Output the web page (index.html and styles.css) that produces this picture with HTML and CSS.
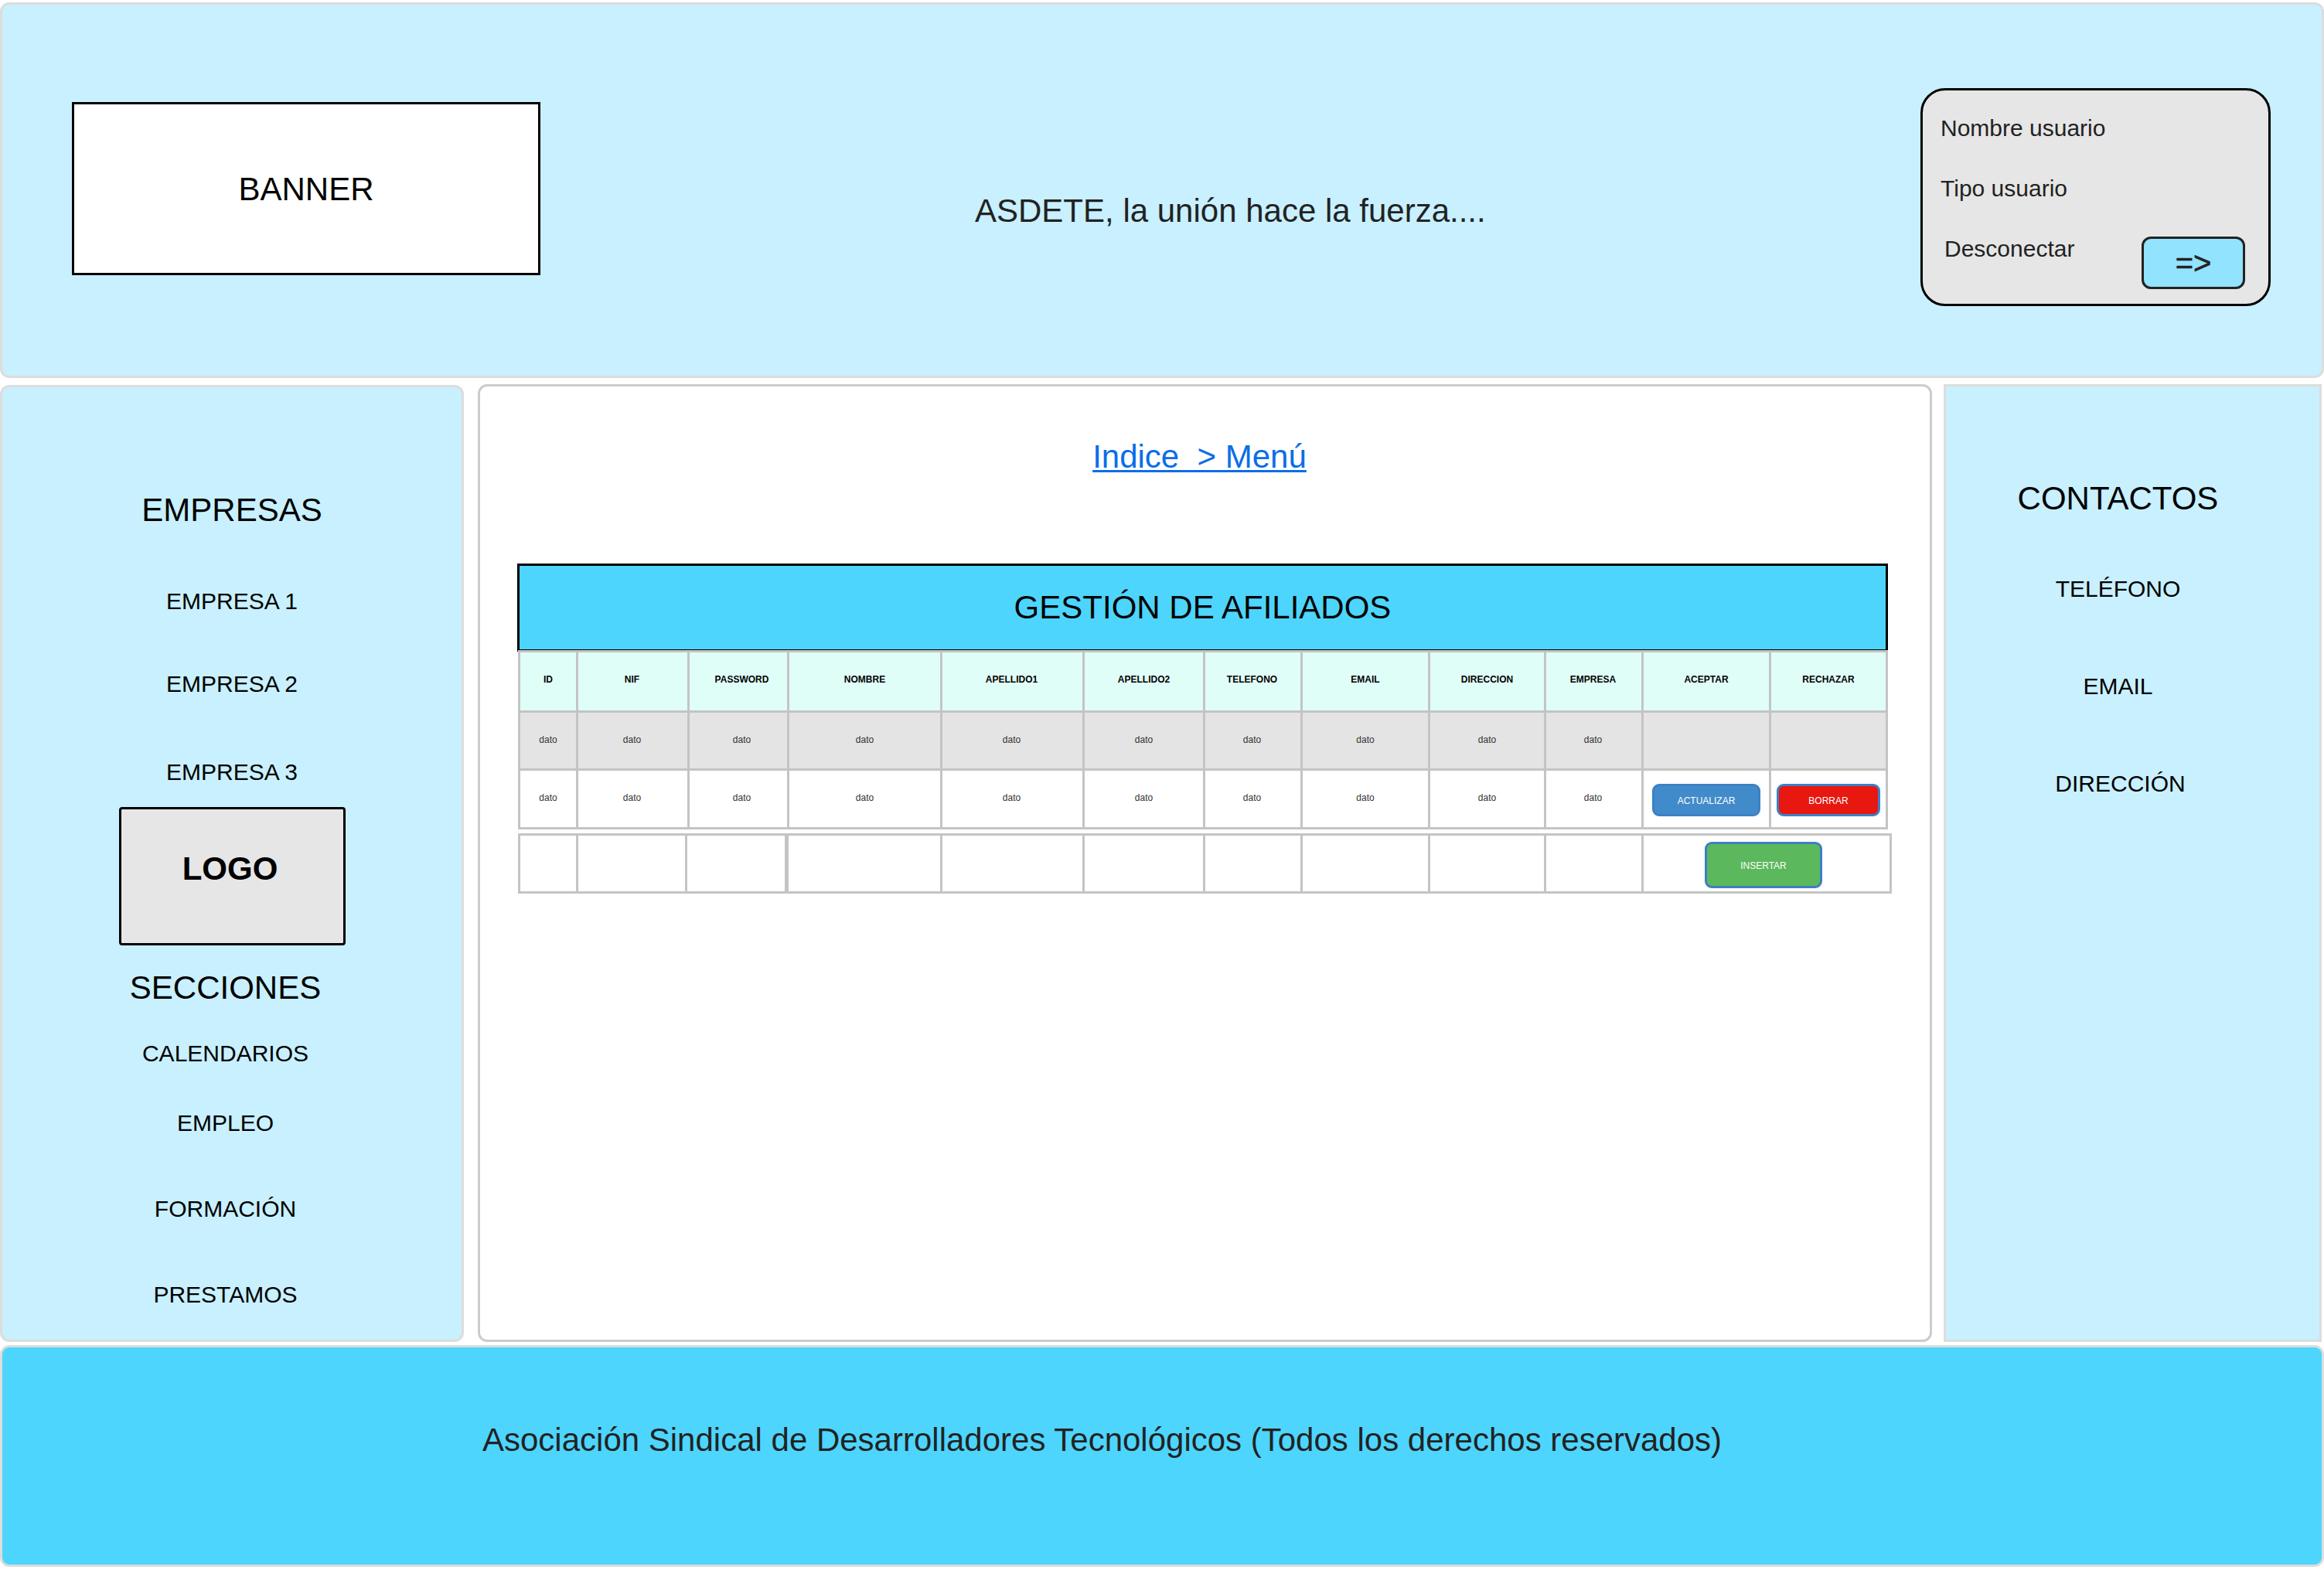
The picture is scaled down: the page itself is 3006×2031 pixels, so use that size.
FILE: index.html
```html
<!DOCTYPE html>
<html lang="es">
<head>
<meta charset="utf-8">
<title>ASDETE - Gestión de afiliados</title>
<link rel="stylesheet" href="styles.css">
</head>
<body>
<div class="page">
  <header class="top">
    <div class="banner">BANNER</div>
    <div class="slogan">ASDETE, la unión hace la fuerza....</div>
    <div class="user">
      <div class="user-line">Nombre usuario</div>
      <div class="user-line user-type">Tipo usuario</div>
      <div class="user-row">
        <span class="user-line user-off">Desconectar</span>
        <button class="go">=&gt;</button>
      </div>
    </div>
  </header>

  <div class="middle">
    <aside class="left">
      <div class="nav-group">
        <h2 class="nav-title nav-first">EMPRESAS</h2>
        <a class="nav-item g77">EMPRESA 1</a>
        <a class="nav-item g73">EMPRESA 2</a>
        <a class="nav-item g80">EMPRESA 3</a>
      </div>
      <div class="logo">LOGO</div>
      <div class="nav-group nav-shift">
        <h2 class="nav-title g31">SECCIONES</h2>
        <a class="nav-item g44">CALENDARIOS</a>
        <a class="nav-item g56">EMPLEO</a>
        <a class="nav-item g77">FORMACIÓN</a>
        <a class="nav-item g77">PRESTAMOS</a>
      </div>
    </aside>

    <main class="content">
      <div class="crumb"><a href="#">Indice &nbsp;&gt; Menú</a></div>
      <h1 class="title">GESTIÓN DE AFILIADOS</h1>
      <table class="grid grid-main">
        <colgroup>
          <col class="c75"><col class="c144"><col class="c129"><col class="c198"><col class="c184"><col class="c156"><col class="c126"><col class="c165"><col class="c150"><col class="c126"><col class="c165"><col class="c151">
        </colgroup>
        <tr class="head">
          <th>ID</th><th>NIF</th><th>PASSWORD</th><th>NOMBRE</th><th>APELLIDO1</th><th>APELLIDO2</th><th>TELEFONO</th><th>EMAIL</th><th>DIRECCION</th><th>EMPRESA</th><th>ACEPTAR</th><th>RECHAZAR</th>
        </tr>
        <tr class="grey">
          <td>dato</td><td>dato</td><td>dato</td><td>dato</td><td>dato</td><td>dato</td><td>dato</td><td>dato</td><td>dato</td><td>dato</td><td></td><td></td>
        </tr>
        <tr>
          <td>dato</td><td>dato</td><td>dato</td><td>dato</td><td>dato</td><td>dato</td><td>dato</td><td>dato</td><td>dato</td><td>dato</td>
          <td class="act"><button class="btn btn-update">ACTUALIZAR</button></td>
          <td class="act"><button class="btn btn-delete">BORRAR</button></td>
        </tr>
      </table>
      <table class="grid grid-add">
        <colgroup>
          <col class="c75"><col class="c141"><col class="c130"><col class="c200"><col class="c184"><col class="c156"><col class="c126"><col class="c165"><col class="c150"><col class="c126"><col class="c321">
        </colgroup>
        <tr>
          <td></td><td></td><td></td><td class="thick"></td><td></td><td></td><td></td><td></td><td></td><td></td>
          <td class="add"><button class="btn btn-insert">INSERTAR</button></td>
        </tr>
      </table>
    </main>

    <aside class="right">
      <h2 class="nav-title right-first">CONTACTOS</h2>
      <a class="nav-item g76">TELÉFONO</a>
      <a class="nav-item g92">EMAIL</a>
      <a class="nav-item g92 nudge">DIRECCIÓN</a>
    </aside>
  </div>

  <footer class="bottom">Asociación Sindical de Desarrolladores Tecnológicos (Todos los derechos reservados)</footer>
</div>
</body>
</html>
```

FILE: styles.css
```css
* { box-sizing: border-box; }
html, body { margin: 0; padding: 0; background: #fff; }
body { font-family: "Liberation Sans", Arial, sans-serif; color: #000; }
.page { width: 3006px; height: 2031px; padding-top: 3px; display: flex; flex-direction: column; overflow: hidden; }

.top { height: 486px; flex: none; display: flex; align-items: flex-start; background: #c8f0ff; border: 3px solid #ddd; border-radius: 12px; }
.banner { width: 606px; height: 224px; margin: 126px 0 0 90px; padding-top: 2px; display: flex; align-items: center; justify-content: center; background: #fff; border: 3px solid #000; font-size: 42px; }
.slogan { margin: 243px 0 0 562px; font-size: 42px; line-height: 48px; color: #222; }
.user { width: 453px; height: 282px; margin: 108px 66px 0 auto; padding: 32px 30px 0 23px; background: #e6e6e6; border: 3px solid #000; border-radius: 32px; color: #222; }
.user-line { display: block; font-size: 30px; line-height: 34px; }
.user-type { margin-top: 44px; }
.user-row { display: flex; align-items: flex-start; margin-top: 44px; }
.user-off { margin-left: 5px; }
.go { width: 134px; height: 68px; margin: 1px 0 0 auto; padding: 0; background: #92e3fd; border: 3px solid #222; border-radius: 12px; font: 40px/1 "Liberation Sans", Arial, sans-serif; color: #222; -webkit-text-stroke: 0.6px #222; }

.middle { height: 1239px; flex: none; margin-top: 8px; display: flex; align-items: stretch; }
.left { width: 600px; flex: none; margin-top: 1px; background: #c8f0ff; border: 3px solid #ddd; border-radius: 12px; display: flex; flex-direction: column; align-items: center; }
.nav-group { display: flex; flex-direction: column; align-items: center; }
.nav-shift { margin-right: 17px; }
.nav-title { margin: 0; font-size: 42px; line-height: 48px; font-weight: 400; }
.nav-first { margin-top: 135px; }
.nav-item { display: block; font-size: 30px; line-height: 34px; }
.g31 { margin-top: 31px; }
.g44 { margin-top: 44px; }
.g56 { margin-top: 56px; }
.g73 { margin-top: 73px; }
.g76 { margin-top: 76px; }
.g77 { margin-top: 77px; }
.g80 { margin-top: 80px; }
.g92 { margin-top: 92px; }
.logo { width: 293px; height: 179px; flex: none; margin-top: 28px; padding: 53px 5px 0 0; background: #e6e6e6; border: 3px solid #000; border-radius: 4px; text-align: center; font-size: 42px; line-height: 48px; font-weight: 700; }

.content { width: 1881px; flex: none; margin-left: 18px; padding: 67px 0 0 48px; background: #fff; border: 3px solid #ccc; border-radius: 12px; }
.crumb { width: 1772px; padding-right: 7px; text-align: center; font-size: 42px; line-height: 48px; }
.crumb a { color: #0a6ee8; text-decoration-thickness: 3px; text-underline-offset: 3px; }
.title { width: 1773px; height: 114px; margin: 114px 0 0; padding-top: 30px; background: #4dd5fd; border: 3px solid #000; text-align: center; font-size: 42px; line-height: 48px; font-weight: 400; }

.grid { width: 1772px; margin-left: 1px; table-layout: fixed; border-collapse: collapse; font-size: 12px; line-height: 14px; color: #333; }
.grid-main { margin-top: -2px; }
.grid th, .grid td { height: 76px; padding: 28px 0 0; vertical-align: top; text-align: center; border: 3px solid #c4c4c4; }
.grid th { color: #000; font-weight: 700; }
.head th { background: #e0fef8; height: 78px; }
.grey td { background: #e4e4e4; height: 75px; }
.grid-main tr > :nth-child(2), .grid-main tr > :nth-child(5), .grid-main tr > :nth-child(7), .grid-main tr > :nth-child(10) { padding-right: 2px; }
.grid-main tr > :nth-child(3) { padding-left: 9px; }
.grid .act { padding: 17px 0 0; }
.grid-add { width: 1775px; margin-top: 5px; }
.grid-add td { height: 75px; }
.grid .add { padding: 8px 8px 0 0; }
.grid .thick { border-left-width: 5px; }

.c75 { width: 75px; }
.c126 { width: 126px; }
.c129 { width: 129px; }
.c130 { width: 130px; }
.c141 { width: 141px; }
.c144 { width: 144px; }
.c150 { width: 150px; }
.c151 { width: 151px; }
.c156 { width: 156px; }
.c165 { width: 165px; }
.c184 { width: 184px; }
.c198 { width: 198px; }
.c200 { width: 200px; }
.c321 { width: 321px; }

.btn { display: block; margin: 0 auto; padding: 2px 0 0; color: #fff; border-radius: 9px; border: 3px solid #3d80c4; font: 12px/14px "Liberation Sans", Arial, sans-serif; }
.btn-update { width: 140px; height: 42px; background: #428bca; }
.btn-delete { width: 134px; height: 42px; background: #e8170f; }
.btn-insert { width: 152px; height: 60px; background: #5cb85c; }

.right { width: 489px; flex: none; margin-left: 15px; padding: 121px 38px 0 0; background: #c8f0ff; border: 3px solid #ddd; display: flex; flex-direction: column; align-items: center; }
.nudge { margin-left: 6px; }

.bottom { height: 287px; flex: none; margin-top: 4px; padding: 96px 0 0 621px; background: #4dd5fd; border: 3px solid #ddd; border-radius: 12px; font-size: 42px; line-height: 48px; color: #222; }
```
